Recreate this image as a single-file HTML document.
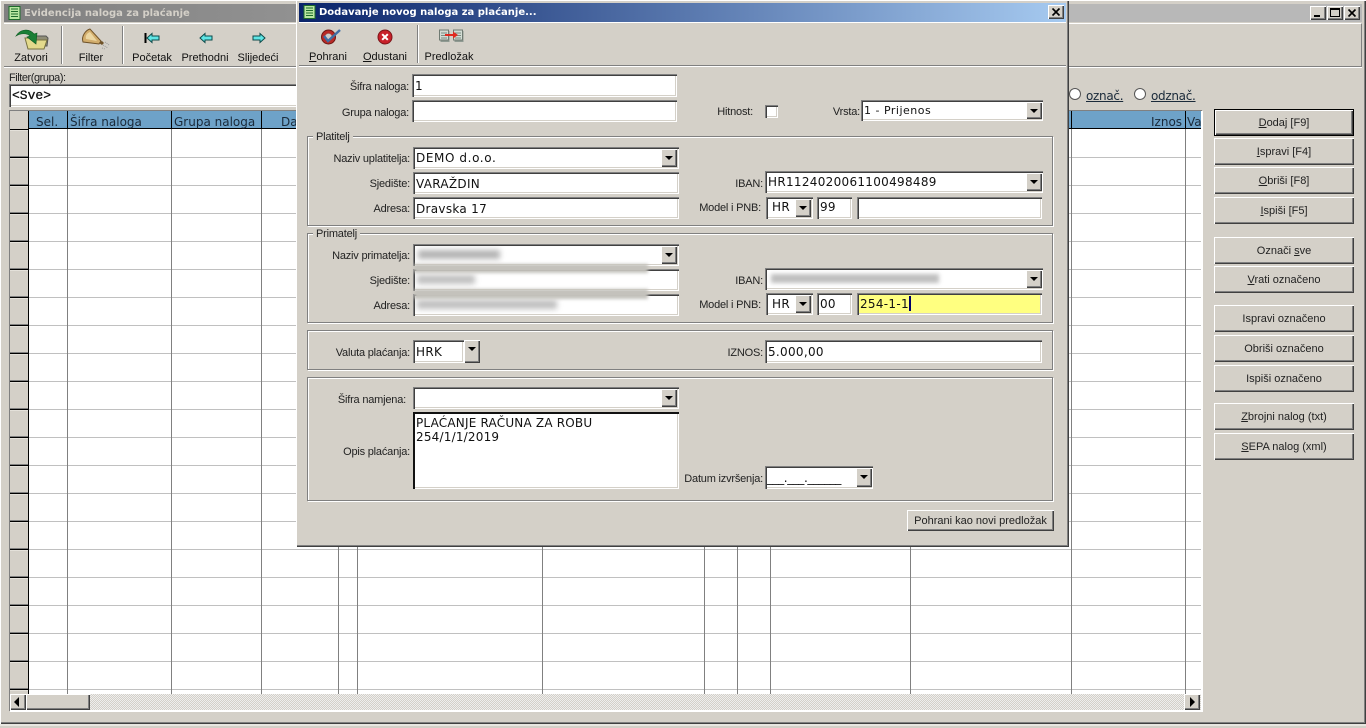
<!DOCTYPE html>
<html><head><meta charset="utf-8"><title>Dodavanje novog naloga za plaćanje</title>
<style>
html,body{margin:0;padding:0;width:1366px;height:728px;overflow:hidden;background:#d4d0c8}
body{position:relative;font:11px/14px "Liberation Sans",sans-serif;color:#000}
div,span.a{position:absolute;box-sizing:border-box}
.t{white-space:nowrap;font:11px/14px "Liberation Sans",sans-serif;color:#111}
.l{white-space:nowrap;text-align:right;font:11px/14px "Liberation Sans",sans-serif;letter-spacing:-.2px;color:#222;margin-top:1px}
.c{white-space:nowrap;text-align:center;font:11px/14px "Liberation Sans",sans-serif;color:#111;margin-top:1px}
.in{background:#fff;box-shadow:inset 1px 1px #808080,inset 2px 2px #404040,inset -1px -1px #fff,inset -2px -2px #d4d0c8;font:12px/16px "DejaVu Sans",sans-serif;letter-spacing:.3px;color:#111;white-space:nowrap;padding:4px 0 0 3px;overflow:hidden}
.b{background:#d4d0c8;box-shadow:inset 1px 1px #fff,inset -1px -1px #404040,inset -2px -2px #808080}
.dd{width:16px;background:#d4d0c8;box-shadow:inset 1px 1px #fff,inset -1px -1px #404040,inset -2px -2px #808080}
.dd:after{content:"";position:absolute;left:4px;top:7px;border:4px solid transparent;border-top:4px solid #000;border-bottom:0}
.btn{left:1214px;width:140px;height:27px;background:#d4d0c8;box-shadow:inset 1px 1px #fff,inset -1px -1px #404040,inset -2px -2px #808080;text-align:center;font:11px/29px "Liberation Sans",sans-serif;color:#222;white-space:nowrap}
.gb{border:1px solid #808080;box-shadow:1px 1px #fff,inset 1px 1px #fff}
.lg{background:#d4d0c8;padding:0 3px;font:11px/13px "Liberation Sans",sans-serif;letter-spacing:-.2px;color:#222;white-space:nowrap;margin-top:1px}
.v{top:111px;width:1px;height:583px;background:#808080}
.h{font:12px/22px "DejaVu Sans",sans-serif;color:#1a2a3a;white-space:nowrap;top:111px;height:18px;overflow:hidden}
.blur{background:#8a8a8a;filter:blur(3px)}
.sep{width:2px;background:#808080;border-right:1px solid #fff}
svg{position:absolute;overflow:visible}
</style></head>
<body>
<!-- main window frame -->
<div style="left:0;top:0;width:1366px;height:724px;background:#d4d0c8;box-shadow:inset 1px 1px #fff,inset -1px -1px #404040,inset -2px -2px #808080"></div>
<div style="left:0;top:724px;width:1366px;height:2px;background:#e8e6e0"></div>
<div style="left:4px;top:4px;width:1358px;height:18px;background:linear-gradient(90deg,#808080,#b8b8b8 70%,#b8b8b8)"></div>
<svg style="left:8px;top:6px" width="14" height="15" viewBox="0 0 14 15"><rect x="1" y="0.5" width="11" height="13" fill="#b8e6a0" stroke="#1d6b2a"/><path d="M3 3h7M3 5.500h7M3 8h7M3 10.500h7" stroke="#1d6b2a"/></svg>
<div class="t" style="left:24px;top:6px;font:bold 10px/15px 'DejaVu Sans',sans-serif;color:#d4d0c8">Evidencija naloga za plaćanje</div>
<div class="b" style="left:1310px;top:6px;width:16px;height:14px"><div style="left:4px;top:9px;width:6px;height:2px;background:#000"></div></div>
<div class="b" style="left:1327px;top:6px;width:16px;height:14px"><div style="left:3px;top:2px;width:10px;height:9px;border:1px solid #000;border-top-width:2px"></div></div>
<div class="b" style="left:1344px;top:6px;width:16px;height:14px"><svg style="left:4px;top:3px" width="8" height="8"><path d="M0.500 0.500l7 7M7.500 0.500l-7 7" stroke="#000" stroke-width="1.600"/></svg></div>
<!-- main toolbar -->
<div style="left:4px;top:23px;width:1358px;height:44px;border-top:1px solid #fff;border-bottom:1px solid #808080;border-right:1px solid #808080;box-shadow:0 1px #fff"></div>
<div class="sep" style="left:61px;top:26px;height:38px"></div>
<div class="sep" style="left:122px;top:26px;height:38px"></div>
<svg style="left:15px;top:28px" width="36" height="22" viewBox="0 0 36 22"><path d="M18 8h13l2 2-1 8H18z" fill="#8f8d76" stroke="#555"/><path d="M10 10h8l2 2h12l-3 9H13z" fill="#e3da8c" stroke="#77713f"/><path d="M1 8C5 1 14 0 19 6l3-1-1 11-9-7 3-1C12 5 6 5 1 8z" fill="#1a7f36" stroke="#0e5a22" stroke-width=".6"/></svg>
<svg style="left:80px;top:28px" width="32" height="22" viewBox="0 0 32 22"><path d="M3 14C1 8 6 2 10 1L21 13 19 16z" fill="#d2ad6c" stroke="#6f5228"/><path d="M6 11C5 8 7 5 10 4l7 9z" fill="#ecd7a2"/><path d="M19 15l3-2 2 2-2 2z" fill="#6f5228"/><path d="M23 17l5 3M25 14l4 3M22 20l3 1" stroke="#999" stroke-dasharray="1 1"/></svg>
<svg style="left:144px;top:32px" width="16" height="12" viewBox="0 0 16 12"><path d="M1.500 1v10" stroke="#000" stroke-width="2"/><path d="M3 6l5-4.500V4h7v4H8v2.500z" fill="#5fe6e6" stroke="#0c4a4a"/></svg>
<svg style="left:199px;top:32px" width="14" height="12" viewBox="0 0 14 12"><path d="M1 6l5-4.500V4h7v4H6v2.500z" fill="#5fe6e6" stroke="#0c4a4a"/></svg>
<svg style="left:252px;top:32px" width="14" height="12" viewBox="0 0 14 12"><path d="M13 6L8 1.500V4H1v4h7v2.500z" fill="#5fe6e6" stroke="#0c4a4a"/></svg>
<div class="c" style="left:10px;top:50px;width:42px">Zatvori</div>
<div class="c" style="left:71px;top:50px;width:40px">Filter</div>
<div class="c" style="left:128px;top:50px;width:48px">Početak</div>
<div class="c" style="left:178px;top:50px;width:54px">Prethodni</div>
<div class="c" style="left:234px;top:50px;width:48px">Slijedeći</div>
<!-- filter -->
<div class="l" style="left:9px;top:70px;width:60px;text-align:left;letter-spacing:-.45px">Filter(grupa):</div>
<div class="in" style="left:9px;top:84px;width:300px;height:23px;font:13px/17px 'Liberation Mono',monospace;letter-spacing:0;padding:3px 0 0 3px;-webkit-text-stroke:.25px #000">&lt;Sve&gt;</div>
<svg style="left:1068px;top:87px" width="14" height="14"><circle cx="7" cy="7" r="5.500" fill="#fff" stroke="#555"/></svg>
<svg style="left:1133px;top:87px" width="14" height="14"><circle cx="7" cy="7" r="5.500" fill="#fff" stroke="#555"/></svg>
<div style="left:1086px;top:88px;font:12px/16px 'DejaVu Sans',sans-serif;letter-spacing:-.3px;color:#1a2a3a;text-decoration:underline;white-space:nowrap">označ.</div>
<div style="left:1151px;top:88px;font:12px/16px 'DejaVu Sans',sans-serif;letter-spacing:-.3px;color:#1a2a3a;text-decoration:underline;white-space:nowrap">odznač.</div>
<!-- grid -->
<div style="left:9px;top:110px;width:1193px;height:601px;background:#fff;box-shadow:inset 1px 1px #808080,1px 1px #fff"></div>
<div style="left:29px;top:130px;width:1172px;height:564px;background:repeating-linear-gradient(180deg,#fff 0,#fff 27px,#c0c0c0 27px,#c0c0c0 28px)"></div>
<div style="left:10px;top:111px;width:18px;height:583px;background:repeating-linear-gradient(180deg,#e4e1da 0,#e4e1da 1px,#d4d0c8 1px,#d4d0c8 26px,#808080 26px,#808080 27px,#000 27px,#000 28px);background-position:0 19px;background-size:18px 28px"></div>
<div style="left:28px;top:111px;width:1px;height:583px;background:#000"></div>
<div style="left:10px;top:111px;width:18px;height:19px;background:#d4d0c8;border-bottom:1px solid #000"></div>
<div style="left:29px;top:111px;width:1172px;height:18px;background:#6ea2c8;border-bottom:1px solid #000"></div>
<div class="v" style="left:67px"></div><div class="v" style="left:171px"></div><div class="v" style="left:261px"></div><div class="v" style="left:338px"></div><div class="v" style="left:357px"></div><div class="v" style="left:542px"></div><div class="v" style="left:704px"></div><div class="v" style="left:737px"></div><div class="v" style="left:770px"></div><div class="v" style="left:910px"></div><div class="v" style="left:1071px"></div><div class="v" style="left:1185px"></div>
<div style="left:67px;top:111px;width:1px;height:18px;background:#000"></div><div style="left:171px;top:111px;width:1px;height:18px;background:#000"></div><div style="left:261px;top:111px;width:1px;height:18px;background:#000"></div><div style="left:1071px;top:111px;width:1px;height:18px;background:#000"></div><div style="left:1185px;top:111px;width:1px;height:18px;background:#000"></div>
<div class="h" style="left:36px">Sel.</div>
<div class="h" style="left:70px">Šifra naloga</div>
<div class="h" style="left:174px">Grupa naloga</div>
<div class="h" style="left:281px">Da</div>
<div class="h" style="left:1151px">Iznos</div>
<div class="h" style="left:1187px;width:14px">Va</div>
<!-- scrollbar -->
<div style="left:10px;top:694px;width:1191px;height:16px;background:repeating-conic-gradient(#d4d0c8 0 25%,#eeeeee 0 50%) 0 0/2px 2px"></div>
<div class="b" style="left:10px;top:694px;width:16px;height:16px"><div style="left:4px;top:3px;border:5px solid transparent;border-right:5px solid #000;border-left:0"></div></div>
<div class="b" style="left:26px;top:694px;width:64px;height:16px"></div>
<div class="b" style="left:1184px;top:694px;width:16px;height:16px"><div style="left:6px;top:3px;border:5px solid transparent;border-left:5px solid #000;border-right:0"></div></div>
<!-- right buttons -->
<div class="btn" style="top:109px;box-shadow:inset 0 0 0 1px #000,inset 2px 2px #fff,inset -2px -2px #404040,inset -3px -3px #808080"><u>D</u>odaj [F9]</div>
<div class="btn" style="top:138px"><u>I</u>spravi [F4]</div>
<div class="btn" style="top:167px"><u>O</u>briši [F8]</div>
<div class="btn" style="top:197px"><u>I</u>spiši [F5]</div>
<div class="btn" style="top:237px">Označi <u>s</u>ve</div>
<div class="btn" style="top:266px"><u>V</u>rati označeno</div>
<div class="btn" style="top:305px">Ispravi označeno</div>
<div class="btn" style="top:335px">Obriši označeno</div>
<div class="btn" style="top:365px">Ispiši označeno</div>
<div class="btn" style="top:403px"><u>Z</u>brojni nalog (txt)</div>
<div class="btn" style="top:433px"><u>S</u>EPA nalog (xml)</div>

<!-- dialog -->
<div style="left:296px;top:0;width:773px;height:547px;background:#d4d0c8;box-shadow:inset 1px 1px #fff,inset -1px -1px #404040,inset -2px -2px #808080"></div>
<div style="left:299px;top:3px;width:767px;height:19px;background:linear-gradient(90deg,#0a246a,#a6caf0)"></div>
<svg style="left:303px;top:5px" width="14" height="15" viewBox="0 0 14 15"><rect x="1" y="0.500" width="11" height="13" fill="#b8e6a0" stroke="#1d6b2a"/><path d="M3 3h7M3 5.500h7M3 8h7M3 10.500h7" stroke="#1d6b2a"/></svg>
<div class="t" style="left:319px;top:5px;font:bold 10px/15px 'DejaVu Sans',sans-serif;color:#fff">Dodavanje novog naloga za plaćanje...</div>
<div class="b" style="left:1048px;top:5px;width:16px;height:14px"><svg style="left:4px;top:3px" width="8" height="8"><path d="M0.500 0.500l7 7M7.500 0.500l-7 7" stroke="#000" stroke-width="1.600"/></svg></div>
<div style="left:299px;top:22px;width:767px;height:44px;border-top:1px solid #fff;border-bottom:1px solid #808080;box-shadow:0 1px #fff"></div>
<div class="sep" style="left:417px;top:25px;height:38px"></div>
<svg style="left:320px;top:28px" width="22" height="18" viewBox="0 0 22 18"><circle cx="8.500" cy="9" r="7" fill="#b92a26" stroke="#6d1815"/><circle cx="8.500" cy="9" r="3.500" fill="#cfcac6" stroke="#8a7a78" stroke-width=".5"/><path d="M4 8l4 5L20 2" fill="none" stroke="#3f6fa6" stroke-width="2.400"/></svg>
<svg style="left:377px;top:29px" width="16" height="16" viewBox="0 0 16 16"><circle cx="8" cy="8" r="7" fill="#c8202a" stroke="#7c1418"/><path d="M5.200 5.200l5.600 5.600M10.800 5.200l-5.600 5.600" stroke="#fff" stroke-width="2"/></svg>
<svg style="left:439px;top:29px" width="25" height="15" viewBox="0 0 25 15"><rect x="1.500" y="2" width="9" height="11" fill="#8f9a92"/><rect x="15.500" y="2" width="9" height="11" fill="#8f9a92"/><rect x="0.500" y="1" width="9" height="10" fill="#d3dcd4" stroke="#6f7a72"/><rect x="14.500" y="1" width="9" height="10" fill="#d3dcd4" stroke="#6f7a72"/><path d="M2 4h6M2 6.500h6M2 9h6M16 4h6M16 6.500h6M16 9h6" stroke="#7a8a80"/><path d="M6 5h8V2.500l5 3.500-5 3.500V7H6z" fill="#e02a20"/></svg>
<div class="c" style="left:305px;top:49px;width:46px"><u>P</u>ohrani</div>
<div class="c" style="left:361px;top:49px;width:48px"><u>O</u>dustani</div>
<div class="c" style="left:424px;top:49px;width:50px">Predložak</div>

<div class="l" style="left:309px;top:79px;width:100px">Šifra naloga:</div>
<div class="in" style="left:412px;top:74px;width:265px;height:23px">1</div>
<div class="l" style="left:309px;top:105px;width:100px">Grupa naloga:</div>
<div class="in" style="left:412px;top:100px;width:265px;height:22px"></div>
<div class="l" style="left:689px;top:104px;width:64px">Hitnost:</div>
<div class="in" style="left:765px;top:105px;width:13px;height:13px;padding:0"></div>
<div class="l" style="left:810px;top:104px;width:50px">Vrsta:</div>
<div class="in" style="left:861px;top:100px;width:182px;height:21px;font-size:11px;letter-spacing:.5px;padding-top:3px">1 - Prijenos</div><div class="dd" style="left:1026px;top:102px;height:17px"></div>

<!-- Platitelj -->
<div class="gb" style="left:307px;top:136px;width:746px;height:90px"></div>
<div class="lg" style="left:313px;top:130px">Platitelj</div>
<div class="l" style="left:310px;top:151px;width:100px">Naziv uplatitelja:</div>
<div class="in" style="left:413px;top:147px;width:266px;height:22px;padding-top:3px;letter-spacing:.6px">DEMO d.o.o.</div><div class="dd" style="left:661px;top:149px;height:18px"></div>
<div class="l" style="left:310px;top:176px;width:100px">Sjedište:</div>
<div class="in" style="left:413px;top:172px;width:266px;height:22px">VARAŽDIN</div>
<div class="l" style="left:310px;top:201px;width:100px">Adresa:</div>
<div class="in" style="left:413px;top:197px;width:266px;height:22px">Dravska 17</div>
<div class="l" style="left:690px;top:176px;width:73px">IBAN:</div>
<div class="in" style="left:765px;top:171px;width:278px;height:22px;padding-top:3px">HR1124020061100498489</div><div class="dd" style="left:1026px;top:173px;height:18px"></div>
<div class="l" style="left:679px;top:200px;width:82px">Model i PNB:</div>
<div class="in" style="left:766px;top:197px;width:47px;height:22px;padding:2px 0 0 6px">HR</div><div class="dd" style="left:795px;top:199px;height:18px"></div>
<div class="in" style="left:817px;top:197px;width:35px;height:22px;padding-top:2px">99</div>
<div class="in" style="left:857px;top:197px;width:185px;height:22px"></div>

<!-- Primatelj -->
<div class="gb" style="left:307px;top:233px;width:746px;height:90px"></div>
<div class="lg" style="left:313px;top:227px">Primatelj</div>
<div class="l" style="left:310px;top:248px;width:100px">Naziv primatelja:</div>
<div class="in" style="left:413px;top:244px;width:266px;height:22px"></div><div class="dd" style="left:661px;top:246px;height:18px"></div>
<div class="l" style="left:310px;top:273px;width:100px">Sjedište:</div>
<div class="in" style="left:413px;top:269px;width:266px;height:22px"></div>
<div class="l" style="left:310px;top:298px;width:100px">Adresa:</div>
<div class="in" style="left:413px;top:294px;width:266px;height:22px"></div>
<div class="blur" style="left:418px;top:250px;width:82px;height:9px;opacity:.65"></div>
<div class="blur" style="left:417px;top:275px;width:58px;height:9px;opacity:.55"></div>
<div class="blur" style="left:417px;top:300px;width:140px;height:9px;opacity:.55"></div>
<div style="left:414px;top:264px;width:234px;height:9px;background:#c4c2bc;filter:blur(1.500px)"></div>
<div style="left:414px;top:289px;width:234px;height:10px;background:#c4c2bc;filter:blur(1.500px)"></div>
<div class="l" style="left:690px;top:273px;width:73px">IBAN:</div>
<div class="in" style="left:765px;top:268px;width:278px;height:22px"></div><div class="dd" style="left:1026px;top:270px;height:18px"></div>
<div class="blur" style="left:771px;top:274px;width:168px;height:9px;opacity:.55;filter:blur(2px)"></div>
<div class="l" style="left:679px;top:297px;width:82px">Model i PNB:</div>
<div class="in" style="left:766px;top:293px;width:47px;height:22px;padding:3px 0 0 6px">HR</div><div class="dd" style="left:795px;top:295px;height:18px"></div>
<div class="in" style="left:817px;top:293px;width:35px;height:22px;padding-top:3px">00</div>
<div class="in" style="left:857px;top:293px;width:185px;height:22px;background:#ffff80;padding-top:3px">254-1-1<span style="display:inline-block;width:2px;height:15px;background:#00006a;vertical-align:-3px"></span></div>

<!-- Valuta -->
<div class="gb" style="left:307px;top:330px;width:746px;height:40px"></div>
<div class="l" style="left:310px;top:345px;width:100px">Valuta plaćanja:</div>
<div class="in" style="left:413px;top:340px;width:51px;height:23px">HRK</div>
<div class="dd" style="left:464px;top:340px;height:23px"></div>
<div class="l" style="left:690px;top:345px;width:73px">IZNOS:</div>
<div class="in" style="left:765px;top:340px;width:277px;height:23px">5.000,00</div>

<!-- Namjena -->
<div class="gb" style="left:307px;top:377px;width:746px;height:124px"></div>
<div class="l" style="left:306px;top:392px;width:100px">Šifra namjena:</div>
<div class="in" style="left:413px;top:387px;width:266px;height:22px"></div><div class="dd" style="left:661px;top:389px;height:18px"></div>
<div class="l" style="left:310px;top:444px;width:100px">Opis plaćanja:</div>
<div class="in" style="left:413px;top:412px;width:266px;height:77px;line-height:14px;letter-spacing:.2px;box-shadow:inset 2px 2px #111,inset -1px -1px #fff,inset -2px -2px #d4d0c8">PLAĆANJE RAČUNA ZA ROBU<br>254/1/1/2019</div>
<div class="l" style="left:670px;top:471px;width:93px">Datum izvršenja:</div>
<div class="in" style="left:765px;top:466px;width:108px;height:23px;font:12px/16px 'DejaVu Sans',sans-serif;letter-spacing:-.4px;padding-left:2px">___.___.______</div><div class="dd" style="left:856px;top:468px;height:19px"></div>
<div class="b" style="left:907px;top:510px;width:147px;height:21px;text-align:center;font:11px/22px 'Liberation Sans',sans-serif;color:#222;white-space:nowrap">Pohrani kao novi predložak</div>
</body></html>
